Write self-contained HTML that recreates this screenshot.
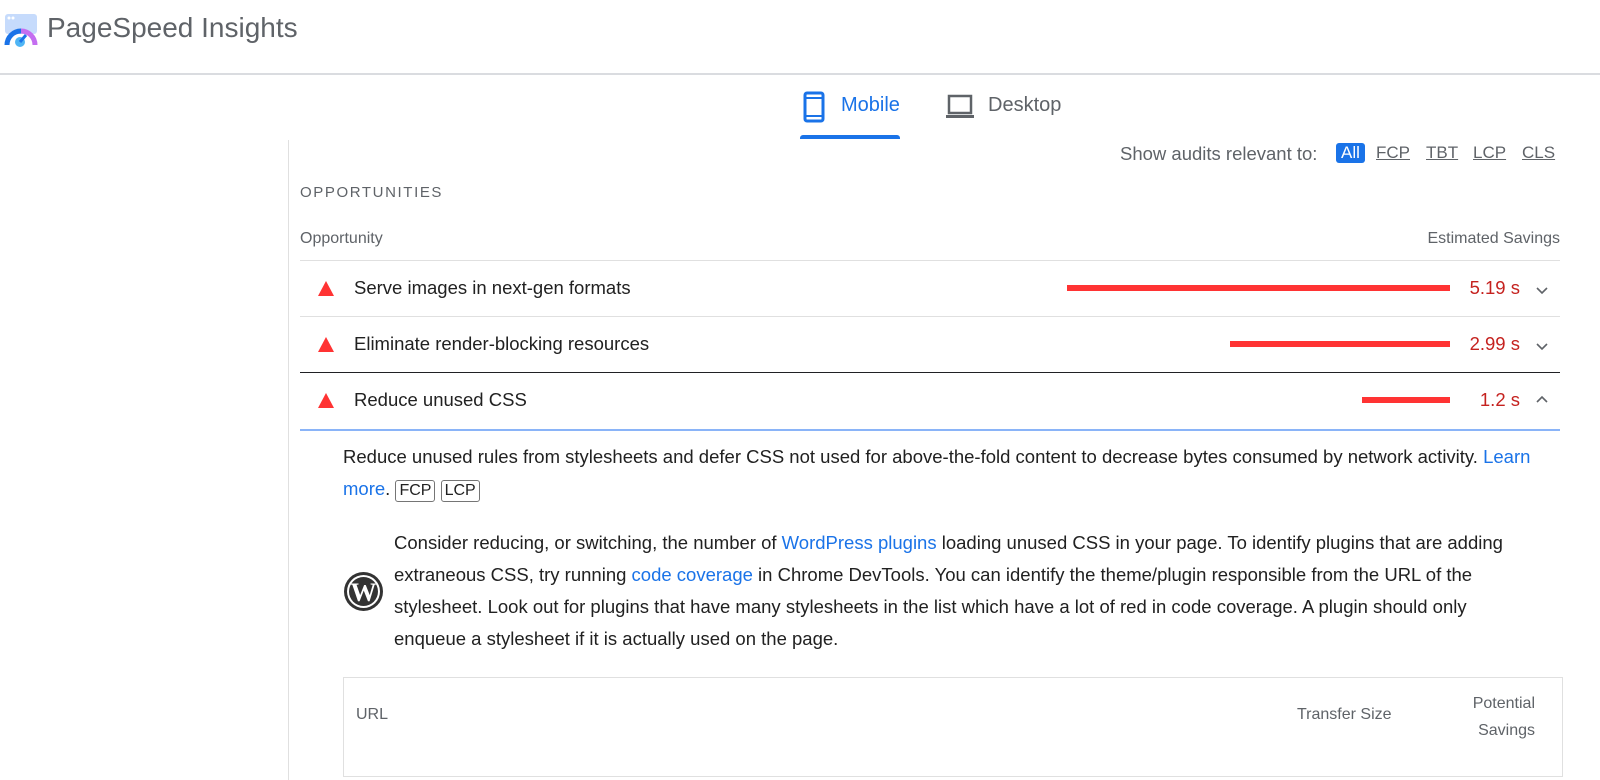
<!DOCTYPE html>
<html><head><meta charset="utf-8"><style>
*{margin:0;padding:0;box-sizing:border-box}
body{width:1600px;height:769px;overflow:hidden;background:#fff;font-family:"Liberation Sans",Arial,sans-serif;position:relative;color:#212121}
.a{position:absolute;white-space:nowrap}
a{color:#1a73e8;text-decoration:none}
.chip{display:inline-block;border:1px solid #757575;border-radius:3px;padding:0 3px;font-size:16px;line-height:20px}
.bar{position:absolute;height:6px;background:#ff3333;top:-3px}
.tri{position:absolute;width:0;height:0;border-left:8px solid transparent;border-right:8px solid transparent;border-bottom:15px solid #ff3333}
.val{color:#c5221f;font-size:18.5px}
.tag{color:#5f6368;text-decoration:underline;font-size:17px}
.t{font-size:18.5px}
</style></head><body>
<svg class="a" style="left:4px;top:13px" width="34" height="34" viewBox="0 0 34 34">
<rect x="1" y="1" width="32" height="20" rx="3" fill="#c6dbfc"/>
<circle cx="5" cy="5" r="1.5" fill="#fff"/><circle cx="9" cy="5" r="1.5" fill="#fff"/>
<path d="M3 32 A14 14 0 0 1 17 18" stroke="#1a73e8" stroke-width="5" fill="none"/>
<path d="M17 18 A14 14 0 0 1 31 32" stroke="#c46ef0" stroke-width="5" fill="none"/>
<circle cx="16" cy="29" r="5" fill="#4fb5f5"/><path d="M16 29 L22 22" stroke="#1a73e8" stroke-width="3"/>
</svg>
<div class="a" style="left:47px;top:12px;font-size:28px;color:#5f6368">PageSpeed Insights</div>
<div class="a" style="left:0;right:0;top:73px;background:#dadce0;height:2px"></div>

<svg class="a" style="left:803px;top:91px" width="22" height="32" viewBox="0 0 22 32"><rect x="2" y="2" width="18" height="28" rx="2" fill="none" stroke="#1a73e8" stroke-width="3"/><line x1="2" y1="7" x2="20" y2="7" stroke="#1a73e8" stroke-width="2"/><line x1="2" y1="25" x2="20" y2="25" stroke="#1a73e8" stroke-width="2"/></svg>
<div class="a" style="left:841px;top:94px;font-size:20px;color:#1a73e8">Mobile</div>
<div class="a" style="left:800px;top:135px;width:100px;height:4px;background:#1a73e8;border-radius:3px 3px 0 0"></div>
<svg class="a" style="left:945px;top:94px" width="30" height="26" viewBox="0 0 30 26"><rect x="4" y="2" width="22" height="17" fill="none" stroke="#5f6368" stroke-width="2.5"/><rect x="1" y="21" width="28" height="3" fill="#5f6368"/></svg>
<div class="a" style="left:988px;top:94px;font-size:20px;color:#5f6368">Desktop</div>

<div class="a" style="left:288px;top:140px;width:1px;height:640px;background:#e0e0e0"></div>

<div class="a" style="left:1120px;top:143px;font-size:18.5px;color:#5f6368">Show audits relevant to:</div>
<div class="a" style="left:1336px;top:143px;width:29px;height:20px;background:#1a73e8;color:#fff;border-radius:3px;font-size:17px;text-align:center;line-height:20px">All</div>
<div class="a tag" style="left:1376px;top:143px">FCP</div>
<div class="a tag" style="left:1426px;top:143px">TBT</div>
<div class="a tag" style="left:1473px;top:143px">LCP</div>
<div class="a tag" style="left:1522px;top:143px">CLS</div>

<div class="a" style="left:300px;top:184px;font-size:15px;letter-spacing:1.6px;color:#5f6368">OPPORTUNITIES</div>
<div class="a" style="left:300px;top:230px;font-size:16px;color:#5f6368">Opportunity</div>
<div class="a" style="right:40px;top:230px;font-size:16px;color:#5f6368">Estimated Savings</div>
<div class="a" style="left:300px;top:260px;width:1260px;height:1px;background:#e0e0e0"></div>
<div class="a" style="left:300px;top:316px;width:1260px;height:1px;background:#e0e0e0"></div>
<div class="a" style="left:300px;top:372px;width:1260px;height:1px;background:#202124"></div>
<div class="a" style="left:300px;top:429px;width:1260px;height:2px;background:#8ab4f8"></div>

<div class="tri" style="left:318px;top:281px"></div>
<div class="a t" style="left:354px;top:277px">Serve images in next-gen formats</div>
<div style="position:absolute;top:288px;left:0"><div class="bar" style="left:1067px;width:383px"></div></div>
<div class="a val" style="right:80px;top:277px">5.19 s</div>
<svg class="a" style="left:1535px;top:341px" width="14" height="10" viewBox="0 0 14 10"><path d="M2 3 L7 8 L12 3" stroke="#5f6368" stroke-width="1.6" fill="none"/></svg>
<svg class="a" style="left:1535px;top:285px" width="14" height="10" viewBox="0 0 14 10"><path d="M2 3 L7 8 L12 3" stroke="#5f6368" stroke-width="1.6" fill="none"/></svg>

<div class="tri" style="left:318px;top:337px"></div>
<div class="a t" style="left:354px;top:333px">Eliminate render-blocking resources</div>
<div style="position:absolute;top:344px;left:0"><div class="bar" style="left:1230px;width:220px"></div></div>
<div class="a val" style="right:80px;top:333px">2.99 s</div>

<div class="tri" style="left:318px;top:393px"></div>
<div class="a t" style="left:354px;top:389px">Reduce unused CSS</div>
<div style="position:absolute;top:400px;left:0"><div class="bar" style="left:1362px;width:88px"></div></div>
<div class="a val" style="right:80px;top:389px">1.2 s</div>
<svg class="a" style="left:1535px;top:395px" width="14" height="10" viewBox="0 0 14 10"><path d="M2 7 L7 2 L12 7" stroke="#5f6368" stroke-width="1.6" fill="none"/></svg>

<div class="a" style="left:343px;top:441px;width:1215px;white-space:normal;font-size:18.5px;line-height:32px;color:#212121">Reduce unused rules from stylesheets and defer CSS not used for above-the-fold content to decrease bytes consumed by network activity. <a>Learn more</a>. <span class="chip">FCP</span> <span class="chip">LCP</span></div>

<svg class="a" style="left:343px;top:571px" width="41" height="41" viewBox="0 0 41 41"><circle cx="20.5" cy="20.5" r="19.5" fill="#333"/><circle cx="20.5" cy="20.5" r="16.5" fill="#fff"/><circle cx="20.5" cy="20.5" r="14.5" fill="#333"/><text x="20.5" y="30" text-anchor="middle" font-family="Liberation Serif,serif" font-size="26" font-weight="bold" fill="#fff">W</text></svg>
<div class="a" style="left:394px;top:527px;width:1140px;white-space:normal;font-size:18.5px;line-height:32px;color:#212121">Consider reducing, or switching, the number of <a>WordPress plugins</a> loading unused CSS in your page. To identify plugins that are adding extraneous CSS, try running <a>code coverage</a> in Chrome DevTools. You can identify the theme/plugin responsible from the URL of the stylesheet. Look out for plugins that have many stylesheets in the list which have a lot of red in code coverage. A plugin should only enqueue a stylesheet if it is actually used on the page.</div>

<div class="a" style="left:343px;top:677px;width:1220px;height:100px;border:1px solid #e0e0e0"></div>
<div class="a" style="left:356px;top:706px;font-size:16px;color:#5f6368">URL</div>
<div class="a" style="left:1297px;top:706px;font-size:16px;color:#5f6368">Transfer Size</div>
<div class="a" style="right:65px;top:690px;font-size:16px;color:#5f6368;text-align:right;line-height:27px">Potential<br>Savings</div>
</body></html>
